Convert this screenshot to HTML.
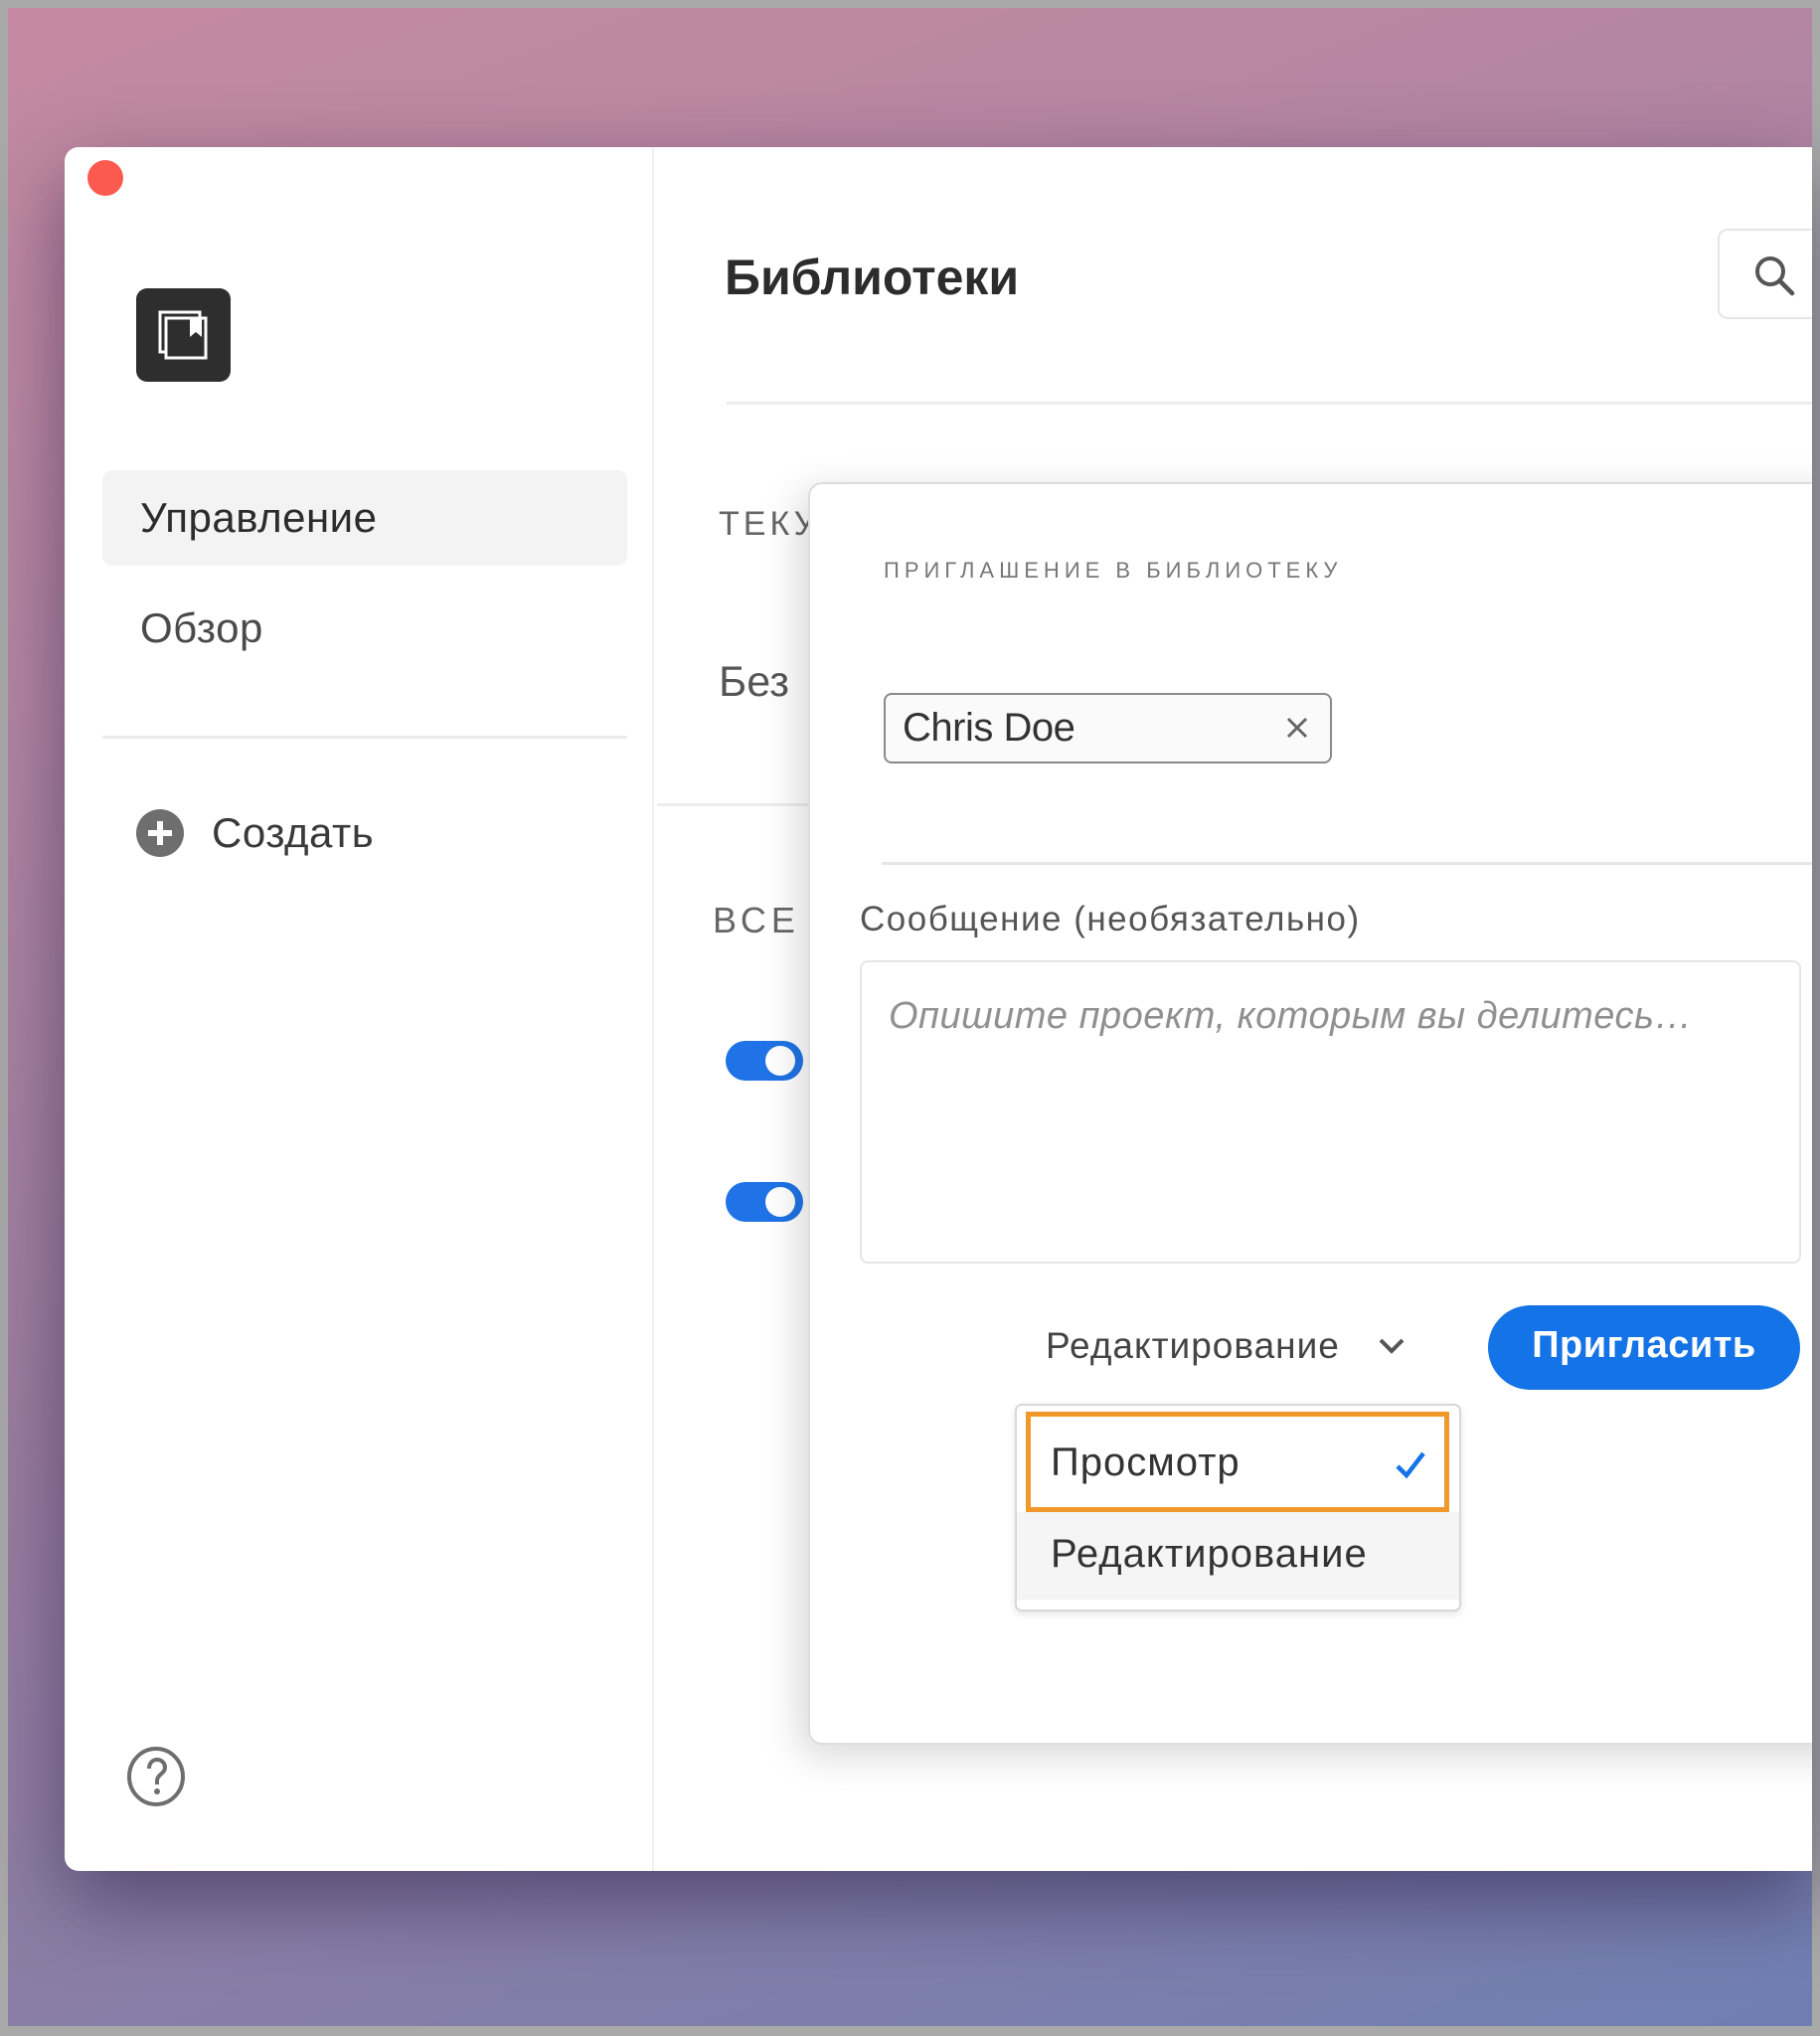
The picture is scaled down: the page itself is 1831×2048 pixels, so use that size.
<!DOCTYPE html>
<html><head><meta charset="utf-8">
<style>
*{margin:0;padding:0;box-sizing:border-box}
body{width:1831px;height:2048px;overflow:hidden;position:relative;background:#a9a9a9;font-family:"Liberation Sans","DejaVu Sans",sans-serif}
.bg{position:absolute;left:8px;top:8px;width:1815px;height:2030px;background:linear-gradient(160deg,#c58aa2 0%,#b085a2 30%,#9a7d9f 55%,#8a7ea6 75%,#6f7fb2 100%)}
.win{position:absolute;left:65px;top:148px;width:1758px;height:1734px;background:#fff;border-radius:14px 0 0 14px;box-shadow:0 30px 80px rgba(40,30,70,.55);overflow:hidden}
.abs{position:absolute}
.t{position:absolute;white-space:nowrap}
</style></head><body>
<div class="bg"></div>
<div class="win">
  <div class="abs" style="left:23px;top:13px;width:36px;height:36px;border-radius:50%;background:#fd5a4f"></div>
  <div class="abs" style="left:591px;top:0;width:2px;height:1734px;background:#f0f0f0"></div>
  <div class="abs" style="left:72px;top:142px;width:95px;height:94px;border-radius:11px;background:#2e2e2e">
    <svg width="95" height="94" viewBox="0 0 95 94"><rect x="24" y="24" width="40" height="40" fill="none" stroke="#fff" stroke-width="3"/><rect x="30" y="30" width="40" height="40" fill="#2e2e2e" stroke="#fff" stroke-width="3"/><path d="M54 31 v18 l6 -5 l6 5 v-18z" fill="#fff"/></svg>
  </div>
  <div class="abs" style="left:38px;top:325px;width:528px;height:96px;border-radius:10px;background:#f3f3f3"></div>
  <div class="t" style="left:76px;top:349px;font-size:42px;color:#2c2c2c;letter-spacing:.5px">Управление</div>
  <div class="t" style="left:76px;top:460px;font-size:42px;color:#4a4a4a;letter-spacing:.5px">Обзор</div>
  <div class="abs" style="left:38px;top:592px;width:528px;height:3px;background:#ececec"></div>
  <svg class="abs" style="left:72px;top:666px" width="48" height="48" viewBox="0 0 48 48"><circle cx="24" cy="24" r="24" fill="#6e6e6e"/><path d="M24 12v24M12 24h24" stroke="#fff" stroke-width="6"/></svg>
  <div class="t" style="left:148px;top:666px;font-size:42px;color:#3a3a3a;letter-spacing:.5px">Создать</div>
  <svg class="abs" style="left:62px;top:1608px" width="60" height="62" viewBox="0 0 60 62"><ellipse cx="30" cy="31" rx="27" ry="28" fill="none" stroke="#6e6e6e" stroke-width="4"/><path d="M23 23c0-6 4-9 8-9s8 3 8 8c0 6-8 7-8 13v4" fill="none" stroke="#6e6e6e" stroke-width="4"/><circle cx="31" cy="46" r="3" fill="#6e6e6e"/></svg>

  <div class="t" style="left:664px;top:102px;font-size:50px;font-weight:bold;color:#2c2c2c">Библиотеки</div>
  <div class="abs" style="left:1663px;top:82px;width:120px;height:91px;border:2px solid #e6e6e6;border-radius:10px"></div>
  <svg class="abs" style="left:1695px;top:104px" width="50" height="50" viewBox="0 0 50 50"><circle cx="21" cy="21" r="13" fill="none" stroke="#555" stroke-width="4"/><path d="M31 31l12 12" stroke="#555" stroke-width="4.5" stroke-linecap="round"/></svg>
  <div class="abs" style="left:666px;top:256px;width:1100px;height:3px;background:#ededed"></div>
  <div class="t" style="left:658px;top:360px;font-size:34px;color:#666;letter-spacing:4px">ТЕКУ</div>
  <div class="t" style="left:658px;top:514px;font-size:43px;color:#555">Без</div>
  <div class="abs" style="left:596px;top:660px;width:160px;height:3px;background:#ededed"></div>
  <div class="t" style="left:652px;top:757px;font-size:36px;color:#666;letter-spacing:5px">ВСЕ</div>
  <div class="abs" style="left:665px;top:899px;width:78px;height:40px;border-radius:20px;background:#1f73e6"><div class="abs" style="left:40px;top:5px;width:30px;height:30px;border-radius:50%;background:#fff"></div></div>
  <div class="abs" style="left:665px;top:1041px;width:78px;height:40px;border-radius:20px;background:#1f73e6"><div class="abs" style="left:40px;top:5px;width:30px;height:30px;border-radius:50%;background:#fff"></div></div>

  <div class="abs" style="left:748px;top:337px;width:1100px;height:1270px;background:#fff;border:2px solid #ddd;border-radius:14px 0 0 14px;box-shadow:-8px 10px 40px rgba(0,0,0,.16)">
    <div class="t" style="left:74px;top:74px;font-size:22px;color:#777;letter-spacing:5px">ПРИГЛАШЕНИЕ В БИБЛИОТЕКУ</div>
    <div class="abs" style="left:74px;top:210px;width:451px;height:71px;border:2px solid #8a8a8a;border-radius:8px;background:#fafafa"></div>
    <div class="t" style="left:93px;top:223px;font-size:40px;color:#333;letter-spacing:-.5px">Chris Doe</div>
    <svg class="abs" style="left:477px;top:232px" width="26" height="26" viewBox="0 0 26 26"><path d="M4 4l18 18M22 4L4 22" stroke="#666" stroke-width="3"/></svg>
    <div class="abs" style="left:72px;top:380px;width:1210px;height:3px;background:#e6e6e6"></div>
    <div class="t" style="left:50px;top:418px;font-size:35px;color:#555;letter-spacing:1.5px">Сообщение (необязательно)</div>
    <div class="abs" style="left:50px;top:479px;width:947px;height:305px;border:2px solid #e6e6e6;border-radius:8px"></div>
    <div class="t" style="left:79px;top:514px;font-size:38px;color:#909090;font-style:italic;letter-spacing:.5px">Опишите проект, которым вы делитесь…</div>
    <div class="t" style="left:237px;top:846px;font-size:37px;color:#444;letter-spacing:1px">Редактирование</div>
    <svg class="abs" style="left:570px;top:855px" width="30" height="24" viewBox="0 0 30 24"><path d="M4 6l11 11L26 6" fill="none" stroke="#555" stroke-width="4"/></svg>
    <div class="abs" style="left:682px;top:826px;width:314px;height:85px;border-radius:43px;background:#1473e6"></div>
    <div class="t" style="left:682px;top:845px;width:314px;text-align:center;font-size:38px;font-weight:bold;color:#fff;letter-spacing:.5px">Пригласить</div>
    <div class="abs" style="left:206px;top:925px;width:449px;height:209px;border:2px solid #d8d8d8;border-radius:7px;background:#fff;box-shadow:0 3px 8px rgba(0,0,0,.1);overflow:hidden">
      <div class="abs" style="left:0;top:107px;width:449px;height:88px;background:#f5f5f5"></div>
    </div>
    <div class="abs" style="left:217px;top:933px;width:426px;height:101px;border:5px solid #f0982a"></div>
    <div class="t" style="left:242px;top:962px;font-size:40px;color:#333;letter-spacing:1px">Просмотр</div>
    <svg class="abs" style="left:587px;top:970px" width="34" height="34" viewBox="0 0 34 34"><path d="M4 18l9 9L30 5" fill="none" stroke="#1473e6" stroke-width="4.5"/></svg>
    <div class="t" style="left:242px;top:1054px;font-size:40px;color:#333;letter-spacing:1px">Редактирование</div>
  </div>
</div>
</body></html>
